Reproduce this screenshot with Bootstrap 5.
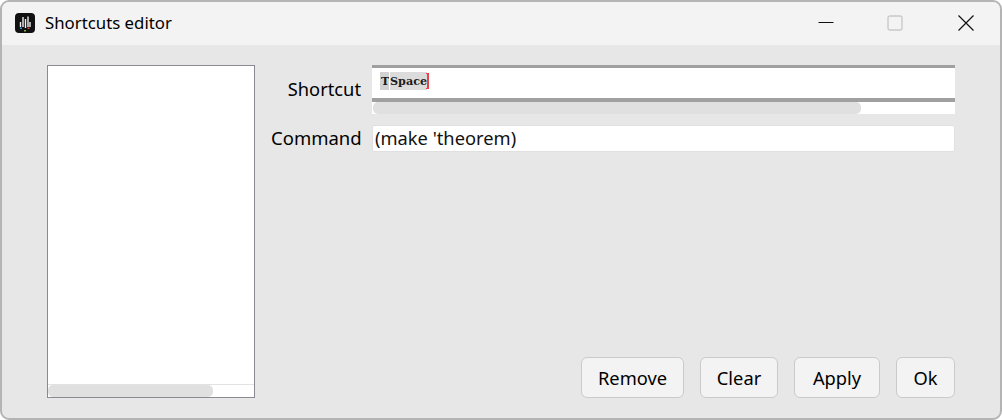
<!DOCTYPE html>
<html lang="en">
<head>
<meta charset="utf-8">
<title>Shortcuts editor</title>
<link href="https://cdn.jsdelivr.net/npm/bootstrap@5.3.0/dist/css/bootstrap.min.css" rel="stylesheet">
<style>
html,body{height:100%;margin:0;background:#fff;overflow:hidden}
body{font-family:"Noto Sans","Open Sans",sans-serif;color:#000}
.win{width:1002px;height:420px;background:#e7e7e7;border:2px solid #b4b4b4;border-radius:9px;overflow:hidden}
.tbar{height:43px;background:#f3f3f3;flex:none}
.ttl{font-size:16.8px;margin-left:10px;line-height:20px;margin-top:-1px}
.logo{margin-left:13px;width:20px;height:20px;margin-top:-1px}
.wbtn{width:46px;height:41px}
.wmin{margin-right:23px}
.wmax{margin-right:25px}
.wcl{margin-right:11px}
.pane{padding:20px 45px 20px 45px;flex:1;min-height:0}
.lst{width:208px;background:#fff;border:1px solid #8a8a94;flex:none}
.lst-sp{flex:1}
.lst-track{height:13px;border-top:1px solid #e2e2e2;flex:none}
.thumb{background:#e0e0e0;border-radius:5px;height:100%}
.lst-thumb{width:165px;height:12px}
.rgt{margin-left:16px;min-width:0}
.lbl{width:90px;text-align:right;font-size:18.3px;line-height:24px;flex:none}
.lbl-c{margin-top:-2px;font-size:18.5px}
.fld{margin-left:11px;width:583px;flex:none}
.sbox{height:49px;background:#fff}
.sedit{height:37px;border-top:3px solid #a0a0a0;border-bottom:4px solid #a0a0a0;padding:4px 0 0 8px}
.strack{height:12px;padding-left:1px}
.sthumb{width:488px;height:12px}
.tk{font-family:"DejaVu Serif",serif;font-weight:700;font-size:11.2px;line-height:19px;height:18px;background:#dcdcdc;color:#1a1a1a;display:block;white-space:nowrap}
.tk1{width:9px;margin-right:1px;overflow:hidden;background:#d2d2d2;padding-left:1px}
.tk2{width:37px;overflow:hidden}
.cur{width:3px;height:16px;margin:1px 0 0 -1px;flex:none;border:solid #e8434b;border-width:1px 0;background:linear-gradient(#e8434b,#e8434b) no-repeat 1px 0/2px 100%}
.cmd{height:27px;background:#fff;border:1px solid #e0e0e0;border-radius:2px;font-size:18.3px;line-height:24px;padding-left:2px;color:#111}
.row-s{height:49px}
.row-c{margin-top:11px;height:27px}
.btn-w{font-family:inherit;height:41px;font-size:18.3px;line-height:24px;padding:0;background:#f3f3f3;border:1px solid #cacaca;border-radius:6px;color:#000}
.b1{width:103px}.b2{width:78px}.b3{width:86px}.b4{width:59px}
.bgap{gap:16px}
</style>
</head>
<body>
<div class="win d-flex flex-column">
  <div class="tbar d-flex align-items-start">
    <svg class="logo align-self-center" viewBox="0 0 20 20" aria-hidden="true">
      <rect width="20" height="20" rx="4" fill="#111"/>
      <path d="M5.500 14V9M8 14V4M10.500 15V6M13 14V3.500M15 14V9" stroke="#eee" stroke-width="1.400"/>
      <rect x="5" y="14.500" width="2" height="1.500" fill="#3a86d8"/>
      <rect x="9" y="17" width="2" height="1.500" fill="#7cb342"/>
      <rect x="12.500" y="14.500" width="2" height="1.500" fill="#d9433f"/>
    </svg>
    <div class="ttl align-self-center">Shortcuts editor</div>
    <div class="ms-auto d-flex">
      <div class="wbtn wmin d-flex align-items-center justify-content-center">
        <svg width="16" height="16" viewBox="0 0 16 16" aria-hidden="true"><path d="M0.500 7.500H15.500" stroke="#111" stroke-width="1"/></svg>
      </div>
      <div class="wbtn wmax d-flex align-items-center justify-content-center">
        <svg width="16" height="16" viewBox="0 0 16 16" aria-hidden="true"><rect x="1" y="1" width="14" height="14" rx="2" fill="none" stroke="#c9c9c9" stroke-width="1.400"/></svg>
      </div>
      <div class="wbtn wcl d-flex align-items-center justify-content-center">
        <svg width="16" height="16" viewBox="0 0 16 16" aria-hidden="true"><path d="M0.500 0.500L15.500 15.500M15.500 0.500L0.500 15.500" stroke="#111" stroke-width="1.200"/></svg>
      </div>
    </div>
  </div>
  <div class="pane d-flex">
    <div class="lst d-flex flex-column">
      <div class="lst-sp"></div>
      <div class="lst-track"><div class="thumb lst-thumb"></div></div>
    </div>
    <div class="rgt d-flex flex-column flex-grow-1">
      <div class="row-s d-flex">
        <div class="lbl pt-2 mt-1">Shortcut</div>
        <div class="fld sbox">
          <div class="sedit d-flex align-items-start">
            <span class="tk tk1">T</span><span class="tk tk2">Space</span><span class="cur"></span>
          </div>
          <div class="strack"><div class="thumb sthumb"></div></div>
        </div>
      </div>
      <div class="row-c d-flex align-items-center">
        <div class="lbl lbl-c">Command</div>
        <div class="fld cmd">(make 'theorem)</div>
      </div>
      <div class="mt-auto d-flex justify-content-end bgap">
        <button type="button" class="btn btn-w b1">Remove</button>
        <button type="button" class="btn btn-w b2">Clear</button>
        <button type="button" class="btn btn-w b3">Apply</button>
        <button type="button" class="btn btn-w b4">Ok</button>
      </div>
    </div>
  </div>
</div>
<script src="https://cdn.jsdelivr.net/npm/bootstrap@5.3.0/dist/js/bootstrap.bundle.min.js"></script>
</body>
</html>
